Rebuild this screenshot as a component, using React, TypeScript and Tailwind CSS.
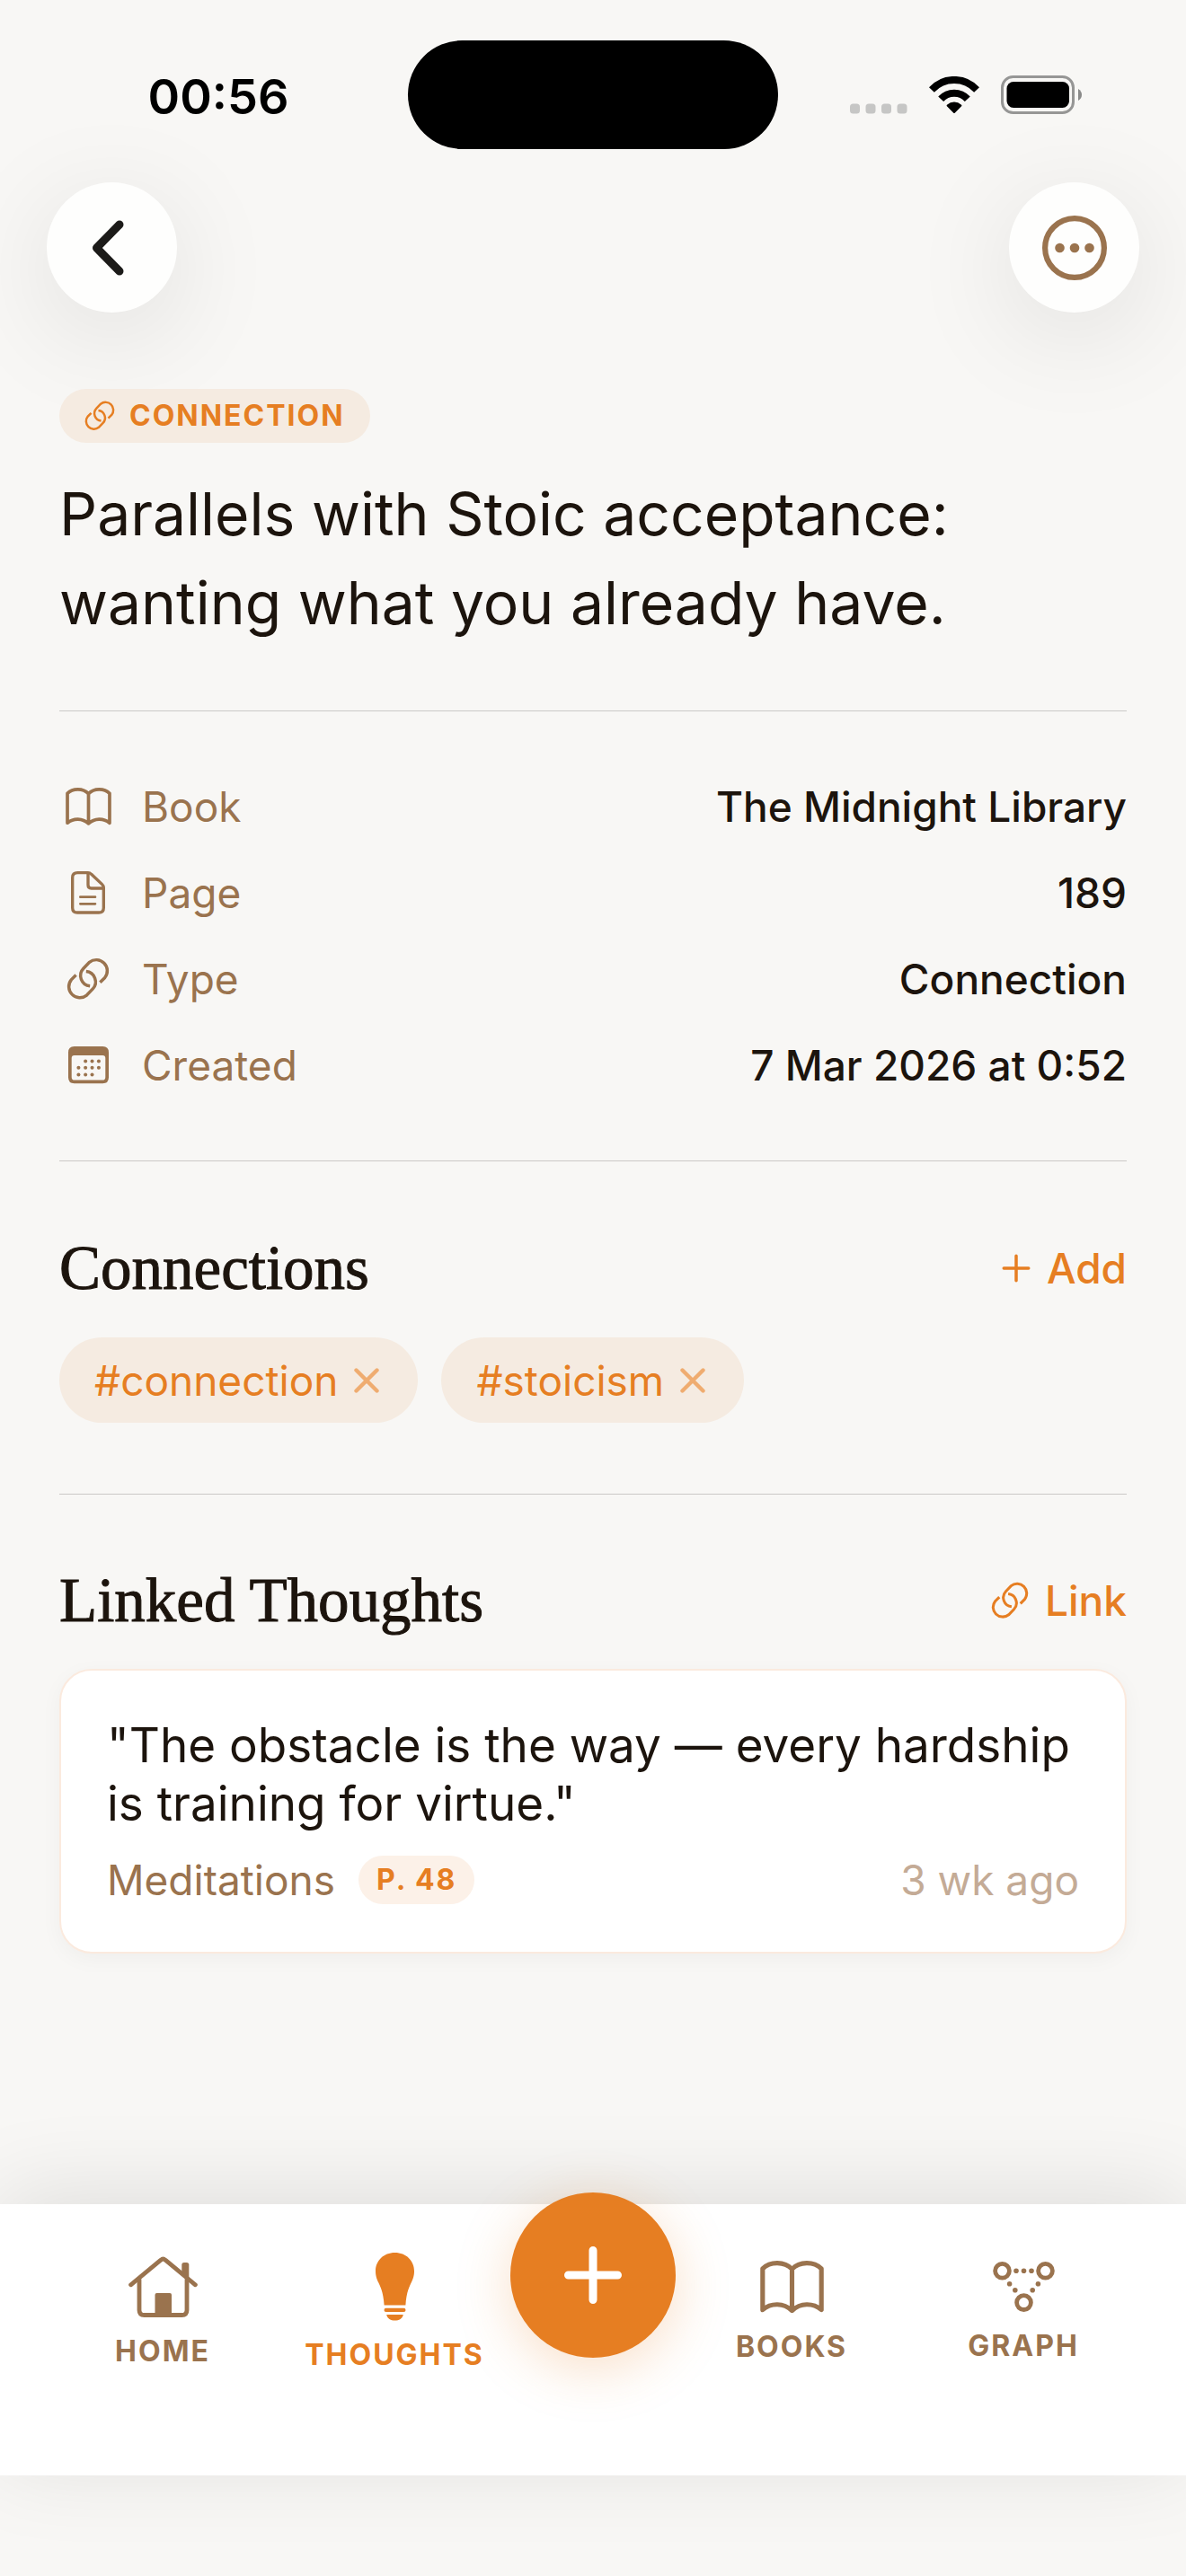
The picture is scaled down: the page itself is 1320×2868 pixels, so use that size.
import React, { useState } from 'react';
import clsx from 'clsx';

type IconProps = { className?: string };

function LinkIcon({ className }: IconProps) {
  return (
    <svg viewBox="0 0 145 143" fill="none" stroke="currentColor" strokeWidth="10.5" className={className} aria-hidden="true">
      <path d="M113 84 L129 68 A37 37 0 0 0 77 16 L57 37 A35 35 0 0 0 79 96" />
      <path d="M32 59 L16 75 A37 37 0 0 0 68 127 L88 106 A35 35 0 0 0 66 47" />
    </svg>
  );
}

function BookIcon({ className }: IconProps) {
  return (
    <svg
      viewBox="0 0 152 126"
      fill="none"
      stroke="currentColor"
      strokeWidth="11"
      strokeLinejoin="round"
      className={className}
      aria-hidden="true"
    >
      <path d="M76 119 V20 C58 1 24 1 6 19 V117 C26 100 56 100 76 119 C96 100 126 100 146 117 V19 C128 1 94 1 76 20" />
    </svg>
  );
}

function PageIcon({ className }: IconProps) {
  return (
    <svg viewBox="0 0 114 143" fill="none" stroke="currentColor" strokeWidth="10" strokeLinejoin="round" className={className} aria-hidden="true">
      <path d="M22 5 H57 Q63 5 68 10 L104 44 Q109 49 109 55 V122 Q109 138 93 138 H21 Q5 138 5 122 V21 Q5 5 22 5Z" />
      <path d="M57 6 V46 Q57 57 68 57 H108" />
      <path d="M31 86 H81 M31 109 H81" strokeWidth="8" strokeLinecap="round" />
    </svg>
  );
}

function CalendarIcon({ className }: IconProps) {
  const dots = [
    [57, 49], [79, 49], [101, 49],
    [34, 71], [57, 71], [79, 71], [101, 71],
    [34, 94], [57, 94], [79, 94],
  ];
  return (
    <svg viewBox="0 0 134 123" fill="currentColor" className={className} aria-hidden="true">
      <path
        fillRule="evenodd"
        d="M20 0 H114 Q134 0 134 20 V103 Q134 123 114 123 H20 Q0 123 0 103 V20 Q0 0 20 0Z M20 30 Q11 30 11 39 V102 Q11 112 21 112 H113 Q123 112 123 102 V39 Q123 30 114 30Z"
      />
      {dots.map(([x, y]) => (
        <circle key={`${x}-${y}`} cx={x} cy={y} r="6" />
      ))}
    </svg>
  );
}

function HomeIcon({ className }: IconProps) {
  return (
    <svg viewBox="0 0 77 68" fill="none" stroke="currentColor" strokeWidth="4.8" strokeLinecap="round" className={className} aria-hidden="true">
      <path d="M2.6 31.8 L36 4.2 Q38.5 2 41 4.2 L74.4 31.8" />
      <path d="M12 26 V60 Q12 65.5 17.5 65.5 H59.5 Q65 65.5 65 60 V26" />
      <path d="M59.3 18 V9.5 Q59.3 7 61.8 7 H64.8 Q67.3 7 67.3 9.5 V25Z" fill="currentColor" stroke="none" />
      <path d="M29.5 66 V43 Q29.5 41 31.5 41 H46 Q48 41 48 43 V66Z" fill="currentColor" stroke="none" />
    </svg>
  );
}

function BulbIcon({ className }: IconProps) {
  return (
    <svg viewBox="0 0 43 76" fill="currentColor" className={className} aria-hidden="true">
      <path d="M21.5 0 C34 0 43 9 43 20.5 C43 34 35 34 33.4 58.5 H9.6 C8 34 0 34 0 20.5 C0 9 9 0 21.5 0Z" />
      <rect x="9.5" y="61.8" width="24" height="4.2" rx="2.1" />
      <path d="M12.2 69 H30.8 C30 73.5 26 75.6 21.5 75.6 C17 75.6 13 73.5 12.2 69Z" />
    </svg>
  );
}

function GraphIcon({ className }: IconProps) {
  const dots = [
    [26, 10.3], [34.5, 10.3], [43, 10.3],
    [18.6, 24.7], [24.8, 31.7], [50.4, 24.7], [44.2, 31.7],
  ];
  return (
    <svg viewBox="0 0 69 56" fill="none" className={className} aria-hidden="true">
      <g stroke="currentColor" strokeWidth="4.8">
        <circle cx="10.5" cy="10.3" r="7.9" />
        <circle cx="58.5" cy="10.3" r="7.9" />
        <circle cx="34.5" cy="45.6" r="7.9" />
      </g>
      <g fill="currentColor">
        {dots.map(([x, y]) => (
          <circle key={`${x}-${y}`} cx={x} cy={y} r="2.8" />
        ))}
      </g>
    </svg>
  );
}

function PlusIcon({ className, weight }: IconProps & { weight: number }) {
  return (
    <svg viewBox="0 0 64 64" fill="none" stroke="currentColor" strokeWidth={weight} strokeLinecap="round" className={className} aria-hidden="true">
      <path d="M32 4.5 V59.5 M4.5 32 H59.5" />
    </svg>
  );
}

function StatusBar() {
  return (
    <div className="grid grid-cols-[1fr_auto_1fr] items-center pt-[45px] text-black">
      <div className="pt-1 pl-8 text-center text-[54px] leading-[64px] font-semibold">00:56</div>
      <div className="h-[121px] w-[412px] rounded-full bg-black" />
      <div className="flex items-center justify-end pr-[116px]">
        <svg viewBox="0 0 64 42" className="mr-6 h-[42px] w-[64px]" aria-hidden="true">
          {[0, 17.5, 35, 52.5].map((x) => (
            <rect key={x} x={x} y="30.5" width="11" height="11" rx="3.5" fill="#c6c6c5" />
          ))}
        </svg>
        <svg viewBox="0 0 56 42" fill="none" stroke="#000" strokeWidth="8" className="mr-6 h-[42px] w-[56px]" aria-hidden="true">
          <path d="M2.9 15 A34 34 0 0 1 53.1 15" />
          <path d="M13.2 25.2 A20 20 0 0 1 42.8 25.2" />
          <path d="M28 40 L20.6 32.5 Q24 29.5 28 29.5 Q32 29.5 35.4 32.5Z" fill="#000" strokeWidth="2" strokeLinejoin="round" />
        </svg>
        <svg viewBox="0 0 90 43" className="h-[43px] w-[90px]" aria-hidden="true">
          <rect x="1.5" y="1.5" width="79" height="40" rx="12" fill="none" stroke="#969695" strokeWidth="3" />
          <rect x="6.5" y="7" width="69.5" height="29" rx="7.5" fill="#000" />
          <path d="M86 15 Q90 17.5 90 21.5 Q90 25.5 86 28Z" fill="#8a8a89" />
        </svg>
      </div>
    </div>
  );
}

const roundButton =
  'flex size-[145px] items-center justify-center rounded-full bg-[#fefefd] shadow-[0_24px_120px_rgba(0,0,0,0.1)]';

function TopBar() {
  return (
    <header className="mt-[37px] flex items-center justify-between px-[52px]">
      <button aria-label="Back" className={clsx(roundButton, 'pr-[10px] text-[#1c1b19]')}>
        <svg viewBox="0 0 36 62" fill="none" stroke="currentColor" strokeWidth="9" strokeLinecap="round" strokeLinejoin="round" className="h-[62px] w-[36px]">
          <path d="M31 5 L5.5 31 L31 57" />
        </svg>
      </button>
      <button aria-label="More options" className={clsx(roundButton, 'text-[#9a734e]')}>
        <svg viewBox="0 0 72 72" className="size-[72px]">
          <circle cx="36" cy="36" r="32.9" fill="none" stroke="currentColor" strokeWidth="6.2" />
          <g fill="currentColor">
            <circle cx="19.5" cy="36" r="5.3" />
            <circle cx="36" cy="36" r="5.3" />
            <circle cx="52.5" cy="36" r="5.3" />
          </g>
        </svg>
      </button>
    </header>
  );
}

const details = [
  { label: 'Book', value: 'The Midnight Library', icon: <BookIcon className="w-[51px]" /> },
  { label: 'Page', value: '189', icon: <PageIcon className="w-[38px]" /> },
  { label: 'Type', value: 'Connection', icon: <LinkIcon className="w-[48px]" /> },
  { label: 'Created', value: '7 Mar 2026 at 0:52', icon: <CalendarIcon className="w-[45px]" /> },
];

function SectionHeader({ title, action, icon }: { title: string; action: string; icon: React.ReactNode }) {
  return (
    <div className="flex items-center justify-between">
      <h2 className="font-['Liberation_Serif',serif] text-[69px] leading-[80px] [-webkit-text-stroke:1px]">{title}</h2>
      <button className="flex items-center gap-[18px] text-[46px] leading-[56px] font-medium text-[#e67e22]">
        {icon}
        {action}
      </button>
    </div>
  );
}

function TabBar() {
  const [active, setActive] = useState('Thoughts');

  const renderTab = (label: string, icon: React.ReactNode) => (
    <button
      onClick={() => setActive(label)}
      className={clsx(
        'flex h-[242px] flex-1 flex-col items-center justify-center gap-[18px] text-[32px] leading-[40px] font-bold tracking-[2px] uppercase',
        active === label ? 'text-[#e67e22]' : 'text-[#9a734e]'
      )}
    >
      {icon}
      {label}
    </button>
  );

  return (
    <nav className="mb-[112px] flex items-start bg-white px-[52px] pb-[60px] shadow-[0_-12px_100px_rgba(0,0,0,0.1)]">
      {renderTab('Home', <HomeIcon className="w-[77px]" />)}
      {renderTab('Thoughts', <BulbIcon className="w-[43px]" />)}
      <button
        aria-label="Add thought"
        className="-mt-[13px] flex size-[184px] items-center justify-center rounded-full bg-[#e67e22] text-white shadow-[0_12px_60px_rgba(230,126,34,0.25)]"
      >
        <PlusIcon weight={9} className="size-[64px]" />
      </button>
      {renderTab('Books', <BookIcon className="w-[71px]" />)}
      {renderTab('Graph', <GraphIcon className="w-[69px]" />)}
    </nav>
  );
}

export default function App() {
  const [tags, setTags] = useState(['connection', 'stoicism']);

  return (
    <div className="flex min-h-screen flex-col overflow-hidden bg-[#f8f7f5] font-[Inter,sans-serif] text-[#1c140d]">
      <StatusBar />
      <TopBar />

      <main className="flex-1 px-[66px] pt-[85px]">
        <div className="flex h-[60px] w-fit items-center gap-[16px] rounded-full bg-[#f5ebe1] px-[28px] text-[32px] leading-[40px] font-bold tracking-[2px] text-[#e67e22]">
          <LinkIcon className="w-[34px]" />
          CONNECTION
        </div>

        <h1 className="mt-[30px] max-w-[1100px] text-[66px] leading-[99px]">
          Parallels with Stoic acceptance: wanting what you already have.
        </h1>

        {/* Details */}
        <dl className="mt-[70px] flex flex-col gap-[40px] border-y border-[#cbc9c7] py-[78px] text-[46px] leading-[56px]">
          {details.map((item) => (
            <div key={item.label} className="flex items-center justify-between">
              <dt className="flex items-center gap-[28px] text-[#9a734e]">
                <span className="flex w-[64px] justify-center">{item.icon}</span>
                {item.label}
              </dt>
              <dd className="font-medium">{item.value}</dd>
            </div>
          ))}
        </dl>

        {/* Tags */}
        <section className="border-b border-[#cbc9c7] pt-[79px] pb-[79px]">
          <SectionHeader title="Connections" action="Add" icon={<PlusIcon weight={7} className="w-[32px]" />} />
          <ul className="mt-[37px] flex flex-wrap gap-[26px]">
            {tags.map((tag) => (
              <li
                key={tag}
                className="flex h-[95px] items-center gap-[18px] rounded-full bg-[#f5ebe1] pr-[43px] pl-[39px] text-[46px] leading-[56px] text-[#e67e22]"
              >
                #{tag}
                <button aria-label={`Remove ${tag}`} onClick={() => setTags(tags.filter((t) => t !== tag))}>
                  <svg viewBox="0 0 28 28" stroke="#efac70" strokeWidth="4.4" strokeLinecap="round" className="size-[28px]">
                    <path d="M2.5 2.5 L25.5 25.5 M25.5 2.5 L2.5 25.5" />
                  </svg>
                </button>
              </li>
            ))}
          </ul>
        </section>

        {/* Linked thoughts */}
        <section className="pt-[78px]">
          <SectionHeader title="Linked Thoughts" action="Link" icon={<LinkIcon className="w-[42px]" />} />
          <article className="mt-[36px] rounded-[36px] border-2 border-[#fbeade] bg-white px-[51px] pt-[51px] pb-[52px] shadow-[0_6px_24px_rgba(0,0,0,0.04)]">
            <p className="text-[53px] leading-[65px]">
              "The obstacle is the way — every hardship is training for virtue."
            </p>
            <div className="mt-[24px] flex items-center text-[46px] leading-[56px]">
              <span className="text-[#9a734e]">Meditations</span>
              <span className="ml-[26px] rounded-full bg-[#fcf1e8] px-[20px] text-[32px] leading-[54px] font-bold tracking-[2px] text-[#e67e22]">
                P. 48
              </span>
              <time className="ml-auto text-[#c4ab96]">3 wk ago</time>
            </div>
          </article>
        </section>
      </main>

      <TabBar />
    </div>
  );
}
